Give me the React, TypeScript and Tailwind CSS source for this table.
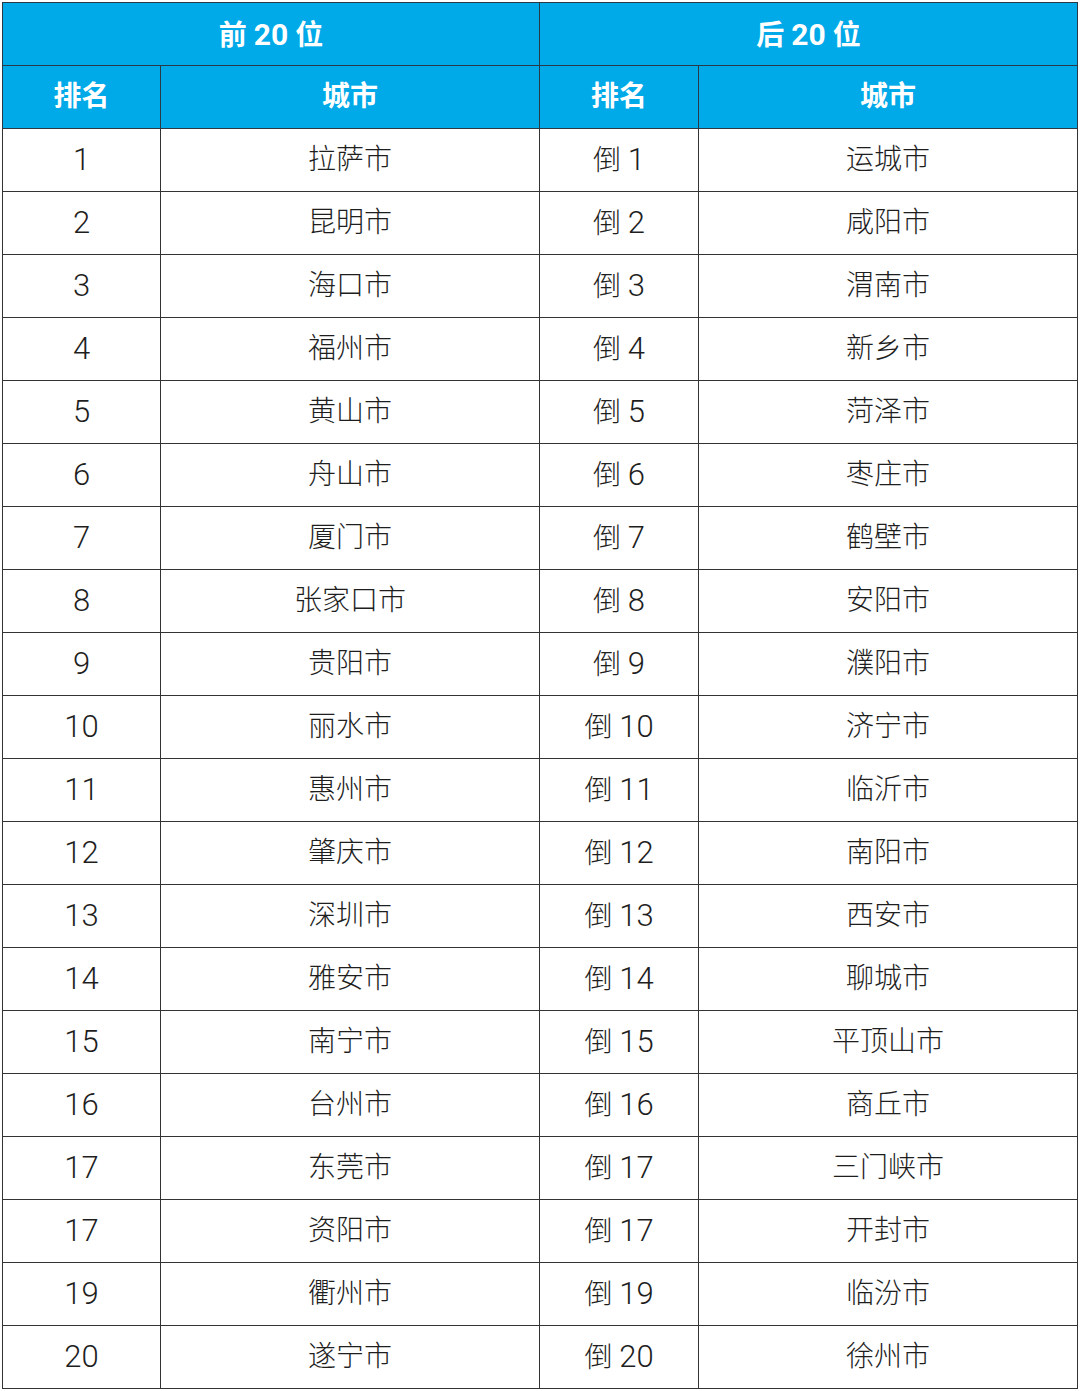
const top20 = [
  "拉萨市", "昆明市", "海口市", "福州市", "黄山市", "舟山市", "厦门市", "张家口市", "贵阳市", "丽水市",
  "惠州市", "肇庆市", "深圳市", "雅安市", "南宁市", "台州市", "东莞市", "资阳市", "衢州市", "遂宁市",
];
const topRanks = ["1", "2", "3", "4", "5", "6", "7", "8", "9", "10", "11", "12", "13", "14", "15", "16", "17", "17", "19", "20"];

const bottom20 = [
  "运城市", "咸阳市", "渭南市", "新乡市", "菏泽市", "枣庄市", "鹤壁市", "安阳市", "濮阳市", "济宁市",
  "临沂市", "南阳市", "西安市", "聊城市", "平顶山市", "商丘市", "三门峡市", "开封市", "临汾市", "徐州市",
];
const bottomRanks = ["1", "2", "3", "4", "5", "6", "7", "8", "9", "10", "11", "12", "13", "14", "15", "16", "17", "17", "19", "20"];

const font = { fontFamily: 'Roboto, "Noto Sans CJK SC", sans-serif' };

export default function App() {
  const head = "border border-[#2a3a44] bg-[#00a9e8] text-white font-bold text-[28px] h-[63px] text-center";
  const cell = "border border-[#333] text-[#1e1e1e] font-light text-[28px] h-[63px] text-center";

  return (
    <main className="bg-white w-[1080px] h-[1391px] pt-[2px] pl-[2px]" style={font}>
      <table className="border-collapse table-fixed w-[1075px]">
        <colgroup>
          <col className="w-[158px]" />
          <col className="w-[379px]" />
          <col className="w-[159px]" />
          <col className="w-[379px]" />
        </colgroup>
        <thead>
          <tr>
            <th colSpan={2} className={head}>前 <span className="text-[30px]">20</span> 位</th>
            <th colSpan={2} className={head}>后 <span className="text-[30px]">20</span> 位</th>
          </tr>
          <tr>
            <th className={head}>排名</th>
            <th className={head}>城市</th>
            <th className={head}>排名</th>
            <th className={head}>城市</th>
          </tr>
        </thead>
        <tbody>
          {top20.map((city, i) => (
            <tr key={i}>
              <td className={cell}><span className="text-[31px]">{topRanks[i]}</span></td>
              <td className={cell}>{city}</td>
              <td className={cell}>倒 <span className="text-[31px]">{bottomRanks[i]}</span></td>
              <td className={cell}>{bottom20[i]}</td>
            </tr>
          ))}
        </tbody>
      </table>
    </main>
  );
}
